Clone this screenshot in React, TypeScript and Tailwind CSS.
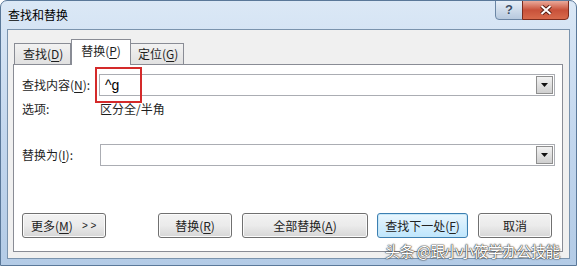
import React from 'react';

const Acc: React.FC<{ k: string }> = ({ k }) => <span className="underline underline-offset-2">{k}</span>;

const Combo: React.FC<{ value?: string }> = ({ value }) => (
  <div className="flex-1 h-[22px] border border-[#abadb3] bg-white flex items-center relative">
    <span className="pl-[5px] text-[14px] font-['Liberation_Sans',sans-serif] text-black">{value}</span>
    <div className="absolute right-[1px] top-[1px] w-[17px] h-[18px] border border-[#8f8f8f] bg-gradient-to-b from-[#f2f2f2] to-[#cfcfcf] flex items-center justify-center">
      <svg width="7" height="4" viewBox="0 0 7 4">
        <path d="M0 0h7L3.5 4z" fill="#111" />
      </svg>
    </div>
  </div>
);

const Btn: React.FC<{ w: string; main?: boolean; children: React.ReactNode; className?: string }> = ({ w, main, children, className }) => (
  <div
    className={`${w} h-[25px] rounded-[3px] border flex items-center justify-center text-[12px] text-[#222] ${
      main
        ? 'border-[#3c7fb1] bg-gradient-to-b from-[#eaf6fd] to-[#bee6fd] shadow-[inset_0_0_0_1px_#c6e7f8]'
        : 'border-[#707070] bg-gradient-to-b from-[#f2f2f2] via-[#ebebeb] to-[#d6d6d6] shadow-[inset_0_0_0_1px_#fbfbfb]'
    } ${className ?? ''}`}
  >
    {children}
  </div>
);

export default function App() {
  return (
    <div className="w-[577px] h-[266px] relative overflow-hidden bg-gradient-to-b from-[#dbe8f6] via-[#c3d7ee] to-[#b3cbe6] border border-[#5a7899] rounded-t-[7px] flex flex-col font-['Noto_Sans_CJK_SC','Microsoft_YaHei',sans-serif] text-[12px] text-[#1e1e1e]">
      {/* title bar */}
      <div className="h-[28px] shrink-0 flex items-start relative">
        <span className="pl-[7px] pt-[5px] text-[12px] text-black">查找和替换</span>
        <div className="absolute left-[494px] top-[-1px] w-[28px] h-[20px] rounded-bl-[4px] border border-[#6b86a5] bg-gradient-to-b from-[#e6eef7] to-[#b7c9de] flex items-center justify-center">
          <span className="text-[13px] font-bold text-[#3b4e66] font-['Liberation_Sans',sans-serif] [text-shadow:0_0_1px_#fff]">?</span>
        </div>
        <div className="absolute left-[521px] top-[-1px] w-[47px] h-[20px] rounded-br-[4px] border border-[#7c2c1e] bg-gradient-to-b from-[#e9a99a] via-[#c8513a] to-[#d86a4c] flex items-center justify-center">
          <svg width="12" height="10" viewBox="0 0 12 10">
            <path d="M1.5 1l9 8M10.5 1l-9 8" stroke="#5a2016" strokeWidth="4" />
            <path d="M1.5 1l9 8M10.5 1l-9 8" stroke="#fff" strokeWidth="2" />
          </svg>
        </div>
      </div>

      {/* client area */}
      <div className="mx-[6px] mb-[6px] flex-1 bg-[#f0f0f0] border border-[#7a93ad] pl-[5px] pr-[6px] pt-[8px] flex flex-col">
        {/* tabs */}
        <div className="flex items-end h-[26px] pl-[1px] relative z-10">
          <div className="w-[57px] h-[21px] border border-[#898c95] border-b-0 bg-gradient-to-b from-[#f2f2f2] to-[#e1e1e1] flex items-center pl-[8px] text-[12px]">
            查找(<Acc k="D" />)
          </div>
          <div className="w-[60px] h-[26px] border border-[#898c95] border-b-0 bg-white flex items-center justify-center pb-[3px] text-[12px] -mb-px">
            替换(<Acc k="P" />)
          </div>
          <div className="w-[53px] h-[21px] border border-[#898c95] border-l-0 border-b-0 bg-gradient-to-b from-[#f2f2f2] to-[#e1e1e1] flex items-center pl-[7px] text-[12px]">
            定位(<Acc k="G" />)
          </div>
        </div>

        {/* panel */}
        <div className="h-[188px] border border-[#898c95] bg-white pl-[8px] pr-[7px] pt-[9px] flex flex-col">
          <div className="flex items-center relative">
            <span className="w-[77px] shrink-0">查找内容(<Acc k="N" />):</span>
            <Combo value="^g" />
            <div className="absolute left-[73px] top-[-7px] w-[47px] h-[36px] border-2 border-[#d42a2a]" />
          </div>
          <div className="flex items-center mt-[3px] h-[20px]">
            <span className="w-[77px] shrink-0">选项:</span>
            <span className="pl-[1px]">区分全/半角</span>
          </div>
          <div className="flex items-center mt-[25px]">
            <span className="w-[78px] shrink-0">替换为(<Acc k="I" />):</span>
            <Combo />
          </div>
          <div className="flex items-center mt-[47px]">
            <Btn w="w-[84px]" className="justify-start pl-[8px]">
              更多(<Acc k="M" />)<span className="ml-[9px] text-[10px] font-['Liberation_Sans',sans-serif]">&gt; &gt;</span>
            </Btn>
            <Btn w="w-[74px]" className="ml-[52px]">
              替换(<Acc k="R" />)
            </Btn>
            <Btn w="w-[126px]" className="ml-[10px]">
              全部替换(<Acc k="A" />)
            </Btn>
            <Btn w="w-[91px]" main className="ml-[9px]">
              查找下一处(<Acc k="F" />)
            </Btn>
            <Btn w="w-[74px]" className="ml-[10px]">
              取消
            </Btn>
          </div>
        </div>
      </div>

      {/* watermark */}
      <div className="absolute left-[384px] top-[239px] text-[15px] tracking-[-0.6px] text-white [text-shadow:0_0_1px_#333,0_0_1px_#333,0_0_2px_#555]">
        头条 @跟小小筱学办公技能
      </div>
    </div>
  );
}
